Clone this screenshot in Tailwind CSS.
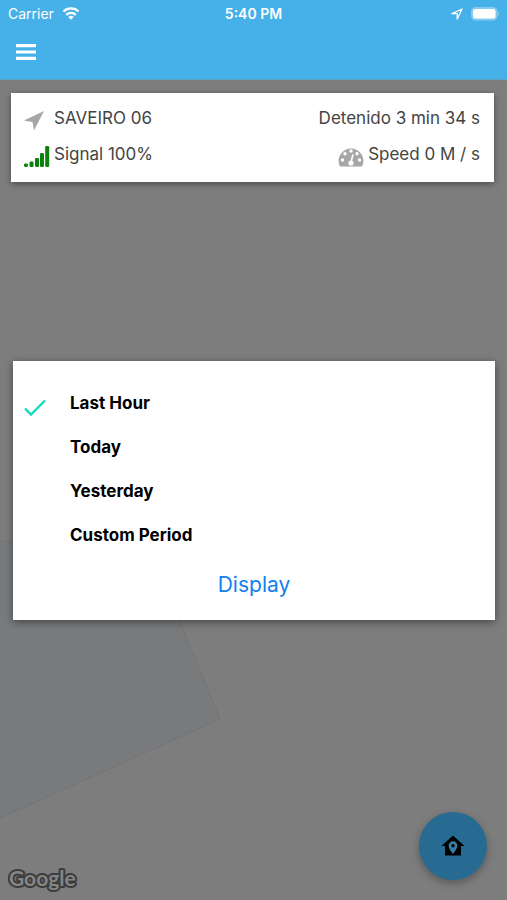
<!DOCTYPE html>
<html lang="en">
<head>
  <meta charset="utf-8">
  <meta name="viewport" content="width=device-width, initial-scale=1">
  <title>Vehicle map</title>
  <script src="https://cdn.jsdelivr.net/npm/@tailwindcss/browser@4"></script>
</head>
<body class="flex min-h-screen flex-col bg-[#7d7d7d] font-['Inter','Liberation_Sans',sans-serif]">
  <header class="border-b border-[#5fa3c4] bg-[#46b0e8] text-white">
    <!-- status bar -->
    <div class="grid grid-cols-3 items-center px-2 pt-1 text-sm">
      <div class="flex items-center gap-2">
        <span>Carrier</span>
        <svg class="h-4 w-[18px]" viewBox="0 0 20 16" fill="none" stroke="currentColor" stroke-width="2.6">
          <path d="M1.600 5.200a12 12 0 0 1 16.800 0"/>
          <path d="M4.700 8.900a7.600 7.600 0 0 1 10.600 0"/>
          <path d="M10 14.500l-3-3.100a4.400 4.400 0 0 1 6 0z" fill="currentColor" stroke="none"/>
        </svg>
      </div>
      <time class="text-center font-semibold">5:40 PM</time>
      <div class="flex items-center justify-end gap-2">
        <svg class="size-3" viewBox="0 0 12 12" fill="none" stroke="currentColor" stroke-width="1.3" stroke-linejoin="round"><path d="M11 1L1 5.600h5.200V11z"/></svg>
        <svg class="h-4 w-7" viewBox="0 0 28 16">
          <rect x="0" y="1" width="26.500" height="13.500" rx="4.500" fill="#fff" fill-opacity=".35"/>
          <rect x="2" y="3" width="22.500" height="9.500" rx="2.500" fill="#fff"/>
          <path d="M27 6v4q1-.6 1-2t-1-2z" fill="#fff" fill-opacity=".4"/>
        </svg>
      </div>
    </div>
    <nav class="flex h-[55px] items-center px-4">
      <button type="button" aria-label="Menu">
        <svg class="h-4 w-5" viewBox="0 0 20 16" fill="currentColor"><path d="M0 0h20v3.200H0zM0 6.400h20v3.200H0zM0 12.800h20V16H0z"/></svg>
      </button>
    </nav>
  </header>

  <main class="relative flex flex-1 flex-col justify-between overflow-hidden">
    <!-- map building outline -->
    <svg class="absolute inset-0 h-full w-full" viewBox="0 0 507 820" preserveAspectRatio="xMinYMax slice">
      <path d="M-2 462L140 445L220 639L-2 739z" fill="#787a7c" stroke="#727578"/>
    </svg>

    <section class="relative mt-[13px] mr-[13px] ml-[11px] bg-white pt-2 pr-[14px] pb-[9px] pl-[13px] text-[17px] text-[#444] shadow-[0_2px_6px_rgba(0,0,0,0.4)]">
      <div class="flex h-9 items-center justify-between">
        <div class="flex items-center gap-1">
          <svg class="mt-1 h-6 w-[26px]" viewBox="0 0 26 24" fill="#a6a6a6"><path d="M20 2L0 11.500L8.500 13L10 21.500z"/></svg>
          <span>SAVEIRO 06</span>
        </div>
        <span>Detenido 3 min 34 s</span>
      </div>
      <div class="flex h-9 items-center justify-between">
        <div class="flex items-center gap-1">
          <svg class="mt-1 h-6 w-[26px]" viewBox="0 0 26 24" fill="#0a820a">
            <rect x="0" y="18.500" width="4" height="3.500" rx="1.400"/>
            <rect x="5.500" y="16.500" width="4" height="5.500" rx="1.200"/>
            <rect x="11" y="13" width="4" height="9" rx="1.200"/>
            <rect x="16" y="8" width="4" height="14" rx="1.200"/>
            <rect x="21.200" y="1" width="4" height="21" rx="1.200"/>
          </svg>
          <span>Signal 100%</span>
        </div>
        <div class="flex items-center gap-1">
          <svg class="mt-1 h-6 w-[26px]" viewBox="0 0 26 24">
            <path d="M3.200 21.500Q2 21.500 1.500 20.500A12.400 12.400 0 1 1 24.500 20.500Q24 21.500 22.800 21.500z" fill="#a6a6a6"/>
            <g fill="#fff">
              <circle cx="4.500" cy="15" r="1.700"/>
              <circle cx="7" cy="8.800" r="1.700"/>
              <circle cx="13" cy="6" r="1.700"/>
              <circle cx="19" cy="8.800" r="1.700"/>
              <circle cx="21.500" cy="15" r="1.700"/>
              <circle cx="13" cy="18" r="2.600"/>
            </g>
            <path d="M13 17.500L14.800 10" stroke="#fff" stroke-width="1.600" stroke-linecap="round"/>
          </svg>
          <span>Speed 0 M / s</span>
        </div>
      </div>
    </section>

    <!-- period dialog -->
    <div class="absolute inset-0 flex items-center pr-3 pl-[13px]">
      <form class="w-full bg-white pt-[21px] pb-2 text-[17px] font-bold text-black shadow-[0_2px_8px_rgba(0,0,0,0.45)]">
        <label class="flex h-11 items-center gap-6 pl-[11px]">
          <input type="radio" name="period" class="peer sr-only" checked>
          <svg class="invisible mt-2 h-5 w-[22px] peer-checked:visible" viewBox="0 0 22 20" fill="none" stroke="#12dcc0" stroke-width="2.400"><path d="M1 10.500L7 16.500L21 2.500"/></svg>
          Last Hour
        </label>
        <label class="flex h-11 items-center gap-6 pl-[11px]">
          <input type="radio" name="period" class="peer sr-only">
          <svg class="invisible mt-2 h-5 w-[22px] peer-checked:visible" viewBox="0 0 22 20" fill="none" stroke="#12dcc0" stroke-width="2.400"><path d="M1 10.500L7 16.500L21 2.500"/></svg>
          Today
        </label>
        <label class="flex h-11 items-center gap-6 pl-[11px]">
          <input type="radio" name="period" class="peer sr-only">
          <svg class="invisible mt-2 h-5 w-[22px] peer-checked:visible" viewBox="0 0 22 20" fill="none" stroke="#12dcc0" stroke-width="2.400"><path d="M1 10.500L7 16.500L21 2.500"/></svg>
          Yesterday
        </label>
        <label class="flex h-11 items-center gap-6 pl-[11px]">
          <input type="radio" name="period" class="peer sr-only">
          <svg class="invisible mt-2 h-5 w-[22px] peer-checked:visible" viewBox="0 0 22 20" fill="none" stroke="#12dcc0" stroke-width="2.400"><path d="M1 10.500L7 16.500L21 2.500"/></svg>
          Custom Period
        </label>
        <button type="button" class="mx-auto block h-[54px] text-[21px] font-normal text-[#1380f0]">Display</button>
      </form>
    </div>

    <div class="relative flex items-end justify-between pr-5 pb-5 pl-2">
      <svg class="-mb-4 h-8 w-20" viewBox="0 0 80 32">
        <text x="1" y="22" font-family="Lato, sans-serif" font-size="21" font-weight="700" fill="#858585" stroke="#3c3c3c" stroke-width="4" stroke-linejoin="round" paint-order="stroke">Google</text>
      </svg>
      <button type="button" aria-label="Home location" class="flex size-[68px] items-center justify-center rounded-full bg-[#276b92] shadow-[0_3px_8px_rgba(0,0,0,0.3)]">
        <svg class="size-6" viewBox="0 0 24 24">
          <path d="M12 1.500L.5 12H4v9.500h16V12h3.500z" fill="#000"/>
          <path d="M12 20c-2.500-3.500-4.400-6-4.400-8.300a4.400 4.400 0 0 1 8.800 0C16.400 14 14.500 16.500 12 20z" fill="#3a7ea5"/>
          <circle cx="12" cy="11.700" r="1.700" fill="#000"/>
        </svg>
      </button>
    </div>
  </main>
</body>
</html>
